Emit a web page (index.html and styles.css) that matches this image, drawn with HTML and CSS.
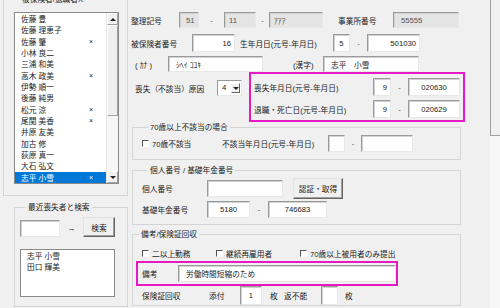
FILE: index.html
```html
<!DOCTYPE html>
<html lang="ja">
<head>
  <meta charset="UTF-8">
  <title>資格喪失届 入力</title>
  <link rel="stylesheet" href="styles.css">
</head>
<body>
<div class="app">

  <!-- 左側：被保険者リスト -->
  <div class="side">
    <fieldset class="grp grp-list">
      <legend>被保険者/退職者X</legend>
      <div class="listbox">
        <ul class="items">
          <li><span>佐藤 豊</span></li>
          <li><span>佐藤 理恵子</span></li>
          <li><span>佐藤 肇</span><span class="x">×</span></li>
          <li><span>小林 良二</span></li>
          <li><span>三浦 和美</span></li>
          <li><span>高木 政美</span><span class="x">×</span></li>
          <li><span>伊勢 順一</span></li>
          <li><span>後藤 純男</span></li>
          <li><span>松元 涼</span><span class="x">×</span></li>
          <li><span>尾関 美香</span><span class="x">×</span></li>
          <li><span>井原 友美</span></li>
          <li><span>加古 修</span></li>
          <li><span>荻原 真一</span></li>
          <li><span>大石 弘文</span></li>
          <li class="sel"><span>志平 小雪</span><span class="x">×</span></li>
        </ul>
        <div class="sb">
          <span class="sb-btn"><i class="tri up"></i></span>
          <span class="sb-thumb"></span>
          <span class="sb-track"></span>
          <span class="sb-btn"><i class="tri down"></i></span>
        </div>
      </div>
    </fieldset>

    <fieldset class="grp grp-recent">
      <legend>最近喪失者と検索</legend>
      <div class="search">
        <span class="box w40 h17"></span>
        <span class="arrow">→</span>
        <span class="btn w32 h20">検索</span>
      </div>
      <ul class="recent">
        <li>志平 小雪</li>
        <li>田口 輝美</li>
      </ul>
    </fieldset>
  </div>

  <!-- 右側：入力フォーム -->
  <div class="main">
    <div class="row r1">
      <span class="lbl w48">整理記号</span>
      <span class="box ro w20 h16 pl6">51</span>
      <span class="dash w25">-</span>
      <span class="box ro w32 h16">11</span>
      <span class="dash w13">-</span>
      <span class="box ro w54 h16">ｱｱｱ</span>
      <span class="lbl w55 ml15">事業所番号</span>
      <span class="box ro w66 h16 pl7">55555</span>
    </div>

    <div class="row r2">
      <span class="lbl w61">被保険者番号</span>
      <span class="box w43 h18 r">16</span>
      <span class="lbl w93 ml5">生年月日(元号-年月日)</span>
      <span class="box w17 h18 c">5</span>
      <span class="dash w17">-</span>
      <span class="box w53 h18 r">501030</span>
    </div>

    <div class="row r3">
      <span class="lbl w37 pl4">( ｶﾅ )</span>
      <span class="box w95 h16 pl7">ｼﾍｲ ｺﾕｷ</span>
      <span class="lbl w30 ml30">(漢字)</span>
      <span class="box w96 h16 pl7">志平　小雪</span>
    </div>

    <div class="row r4">
      <div class="reason">
        <span class="lbl w86 pl4">喪失（不該当）原因</span>
        <span class="combo">
          <span class="combo-val">4</span>
          <span class="combo-btn"><i class="tri down"></i></span>
        </span>
      </div>
      <div class="mark mark-date">
        <div class="row">
          <span class="lbl w119">喪失年月日(元号-年月日)</span>
          <span class="box w18 h18 r">9</span>
          <span class="dash w17">-</span>
          <span class="box w52 h18 c">020630</span>
        </div>
        <div class="row">
          <span class="lbl w119">退職・死亡日(元号-年月日)</span>
          <span class="box w18 h18 r">9</span>
          <span class="dash w17">-</span>
          <span class="box w52 h18 c">020629</span>
        </div>
      </div>
    </div>

    <fieldset class="grp g70">
      <legend>70歳以上不該当の場合</legend>
      <div class="row h17">
        <span class="chkl w80"><span class="chk"></span>70歳不該当</span>
        <span class="lbl w106">不該当年月日(元号-年月日)</span>
        <span class="box w17 h17"></span>
        <span class="dash w16">-</span>
        <span class="box w52 h17"></span>
      </div>
    </fieldset>

    <fieldset class="grp gnum">
      <legend>個人番号 / 基礎年金番号</legend>
      <div class="row h21">
        <span class="lbl w65">個人番号</span>
        <span class="box w76 h17"></span>
        <span class="btn w50 h21 ml10">認証・取得</span>
      </div>
      <div class="row h17 mt2">
        <span class="lbl w65">基礎年金番号</span>
        <span class="box w43 h17 c">5180</span>
        <span class="dash w18">-</span>
        <span class="box w59 h17 c">746683</span>
      </div>
    </fieldset>

    <fieldset class="grp gnote">
      <legend>備考/保険証回収</legend>
      <div class="row checks">
        <span class="chkl w74"><span class="chk"></span>二以上勤務</span>
        <span class="chkl w84"><span class="chk"></span>継続再雇用者</span>
        <span class="chkl"><span class="chk"></span>70歳以上被用者のみ提出</span>
      </div>
      <div class="mark mark-note">
        <span class="lbl w36">備考</span>
        <span class="box w218 h17 pl7">労働時間短縮のため</span>
      </div>
      <div class="row h19 collect">
        <span class="lbl w67">保険証回収</span>
        <span class="lbl w31">添付</span>
        <span class="box w22 h19 c">1</span>
        <span class="lbl w14 ml8">枚</span>
        <span class="lbl w37">返不能</span>
        <span class="box w17 h19"></span>
        <span class="lbl ml7">枚</span>
      </div>
    </fieldset>
  </div>

  <div class="vscroll"><div class="vthumb"></div></div>
</div>
</body>
</html>
```

FILE: styles.css
```css
* {
  box-sizing: border-box;
}

body {
  margin: 0;
  width: 500px;
  height: 308px;
  overflow: hidden;
  background-color: #f0f0f0;
  font-family: "Liberation Sans", "Noto Sans CJK JP", sans-serif;
  font-size: 7.7px;
  color: #222;
}

ul {
  list-style: none;
  margin: 0;
  padding: 0;
}

.app {
  display: flex;
  height: 308px;
}

.side {
  width: 128px;
  flex-shrink: 0;
}

.main {
  width: 362px;
  flex-shrink: 0;
  padding-top: 12px;
}

/* group box */
.grp {
  margin: 0;
  padding: 0;
  min-width: 0;
  border: 1px solid #d5d5d5;
}

.grp legend {
  height: 11px;
  line-height: 11px;
  margin-left: 6px;
  padding: 0 2px;
}

/* left list */
.grp-list {
  width: 125px;
  margin: -6px 0 0 3px;
  padding: 7px 0 11px 10px;
}

.listbox {
  display: flex;
  width: 105px;
  height: 172px;
  border: 1px solid #8a8a8a;
  background-color: #fff;
}

.items {
  flex: 1;
}

.items li {
  display: flex;
  align-items: center;
  height: 11.33px;
  padding: 0 13px 0 6px;
  white-space: nowrap;
}

.items .x {
  margin-left: auto;
  font-size: 7px;
}

.items .sel {
  background-color: #0078d7;
  color: #fff;
}

.sb {
  width: 12px;
  display: flex;
  flex-direction: column;
  background-color: #f0f0f0;
  border-left: 1px solid #e6e6e6;
}

.sb-btn {
  height: 12px;
  display: flex;
  align-items: center;
  justify-content: center;
  background-color: #f0f0f0;
  border: 1px solid;
  border-color: #fff #a0a0a0 #a0a0a0 #fff;
}

.sb-thumb {
  height: 91px;
  background-color: #f0f0f0;
  border: 1px solid;
  border-color: #fff #a0a0a0 #a0a0a0 #fff;
}

.sb-track {
  flex: 1;
  background-color: #f6f6f6;
}

.tri {
  width: 0;
  height: 0;
  border-left: 3px solid transparent;
  border-right: 3px solid transparent;
}

.tri.up {
  border-bottom: 3px solid #222;
}

.tri.down {
  border-top: 3px solid #222;
}

/* recent / search */
.grp-recent {
  width: 114px;
  margin: 6px 0 0 14px;
  padding: 0 0 9px 5px;
}

.search {
  display: flex;
  align-items: flex-end;
  margin-top: 4px;
}

.arrow {
  width: 23px;
  align-self: center;
  text-align: center;
  padding-top: 2px;
}

.recent {
  width: 95px;
  height: 48px;
  margin-top: 12px;
  padding: 1px 0 0 6px;
  border: 1px solid #8a8a8a;
  background-color: #fff;
}

.recent li {
  line-height: 11px;
}

/* form rows */
.row {
  display: flex;
  align-items: center;
}

.lbl {
  flex-shrink: 0;
  white-space: nowrap;
}

.box {
  flex-shrink: 0;
  display: flex;
  align-items: center;
  padding: 0 4px;
  white-space: nowrap;
  background-color: #fff;
  border: 1px solid;
  border-color: #9a9a9a #e8e8e8 #e8e8e8 #9a9a9a;
  box-shadow: inset 1px 1px #d2d2d2;
}

.box.ro {
  background-color: #e4e4e4;
  color: #555;
}

.box.r {
  justify-content: flex-end;
  padding-right: 3px;
}

.box.c {
  justify-content: center;
}

.dash {
  flex-shrink: 0;
  text-align: center;
  color: #555;
}

.btn {
  flex-shrink: 0;
  display: flex;
  align-items: center;
  justify-content: center;
  background-color: #f0f0f0;
  border: 1px solid;
  border-color: #e3e3e3 #646464 #646464 #e3e3e3;
  box-shadow: inset -1px -1px #a0a0a0;
}

.chkl {
  flex-shrink: 0;
  display: flex;
  align-items: center;
  white-space: nowrap;
}

.chk {
  width: 7px;
  height: 7px;
  margin-right: 3px;
  background-color: #fff;
  border: 1px solid;
  border-color: #555 #fff #fff #555;
}

.r1 {
  height: 16px;
  margin-left: 3px;
}

.r2 {
  height: 18px;
  margin: 6px 0 0 3px;
}

.r3 {
  height: 16px;
  margin: 4px 0 0 3px;
}

.r4 {
  align-items: flex-start;
  margin-left: 3px;
}

.reason {
  display: flex;
  align-items: center;
  margin-top: 8px;
}

.combo {
  display: flex;
  width: 25px;
  height: 16px;
  padding: 2px 1px 2px 4px;
  background-color: #fff;
  border: 1px solid;
  border-color: #9a9a9a #e8e8e8 #e8e8e8 #9a9a9a;
}

.combo-val {
  flex: 1;
  line-height: 10px;
}

.combo-btn {
  width: 9px;
  display: flex;
  align-items: center;
  justify-content: center;
  background-color: #f0f0f0;
  border: 1px solid;
  border-color: #fff #646464 #646464 #fff;
}

.mark {
  border: 2px solid #e619c5;
}

.mark-date {
  width: 216px;
  height: 50px;
  margin-left: 7px;
  padding: 4px 0 0 3px;
  display: flex;
  flex-direction: column;
  gap: 4px;
}

.mark-date .row {
  height: 18px;
}

.g70 {
  width: 329px;
  margin-left: 4px;
  padding: 2px 0 7px 9px;
}

.gnum {
  width: 329px;
  margin: 5px 0 0 4px;
  padding: 2px 0 6px 9px;
}

.gnote {
  width: 329px;
  margin: 4px 0 0 4px;
  padding: 0;
}

.checks {
  height: 10px;
  margin: 8px 0 0 9px;
}

.mark-note {
  display: flex;
  align-items: center;
  width: 262px;
  height: 25px;
  margin: 3px 0 0 3px;
  padding-left: 4px;
}

.collect {
  margin-left: 9px;
}

.vscroll {
  width: 10px;
  flex-shrink: 0;
  background-color: #f7f7f7;
}

.vthumb {
  height: 136px;
  background-color: #f0f0f0;
  border-left: 1px solid #a0a0a0;
  border-bottom: 1px solid #a0a0a0;
}

/* sizes */
.w13 { width: 13px; }
.w14 { width: 14px; }
.w16 { width: 16px; }
.w17 { width: 17px; }
.w18 { width: 18px; }
.w20 { width: 20px; }
.w22 { width: 22px; }
.w25 { width: 25px; }
.w30 { width: 30px; }
.w31 { width: 31px; }
.w32 { width: 32px; }
.w36 { width: 36px; }
.w37 { width: 37px; }
.w40 { width: 40px; }
.w43 { width: 43px; }
.w48 { width: 48px; }
.w50 { width: 50px; }
.w52 { width: 52px; }
.w53 { width: 53px; }
.w54 { width: 54px; }
.w55 { width: 55px; }
.w59 { width: 59px; }
.w61 { width: 61px; }
.w65 { width: 65px; }
.w66 { width: 66px; }
.w67 { width: 67px; }
.w74 { width: 74px; }
.w76 { width: 76px; }
.w80 { width: 80px; }
.w84 { width: 84px; }
.w86 { width: 86px; }
.w93 { width: 93px; }
.w95 { width: 95px; }
.w96 { width: 96px; }
.w106 { width: 106px; }
.w119 { width: 119px; }
.w218 { width: 218px; }

.h16 { height: 16px; }
.h17 { height: 17px; }
.h18 { height: 18px; }
.h19 { height: 19px; }
.h20 { height: 20px; }
.h21 { height: 21px; }

.ml5 { margin-left: 5px; }
.ml7 { margin-left: 7px; }
.ml8 { margin-left: 8px; }
.ml10 { margin-left: 10px; }
.ml15 { margin-left: 15px; }
.ml30 { margin-left: 30px; }
.mt2 { margin-top: 2px; }
.pl4 { padding-left: 4px; }
.pl6 { padding-left: 6px; }
.pl7 { padding-left: 7px; }
```
